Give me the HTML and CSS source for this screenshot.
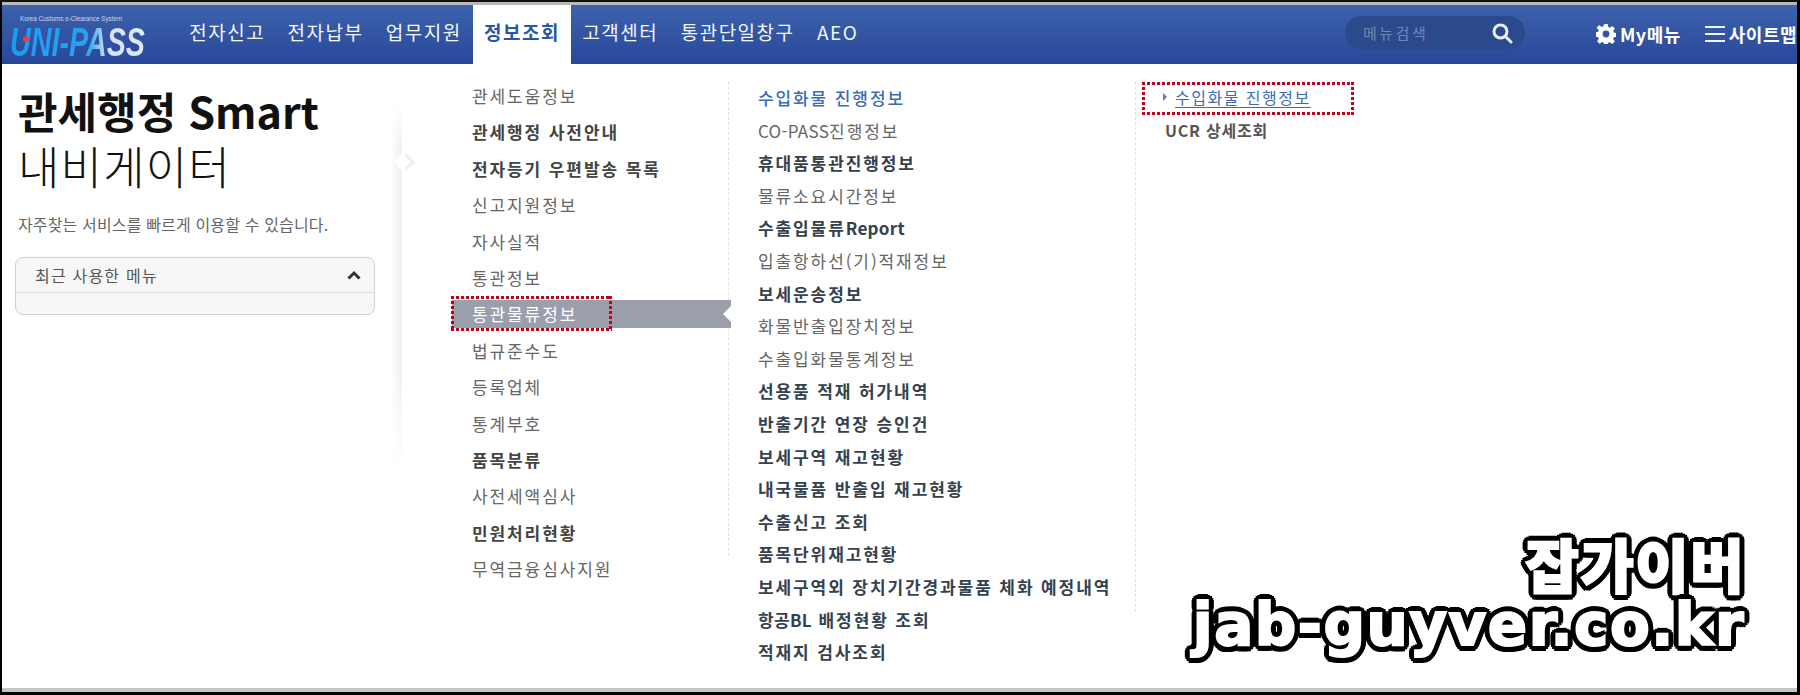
FILE: index.html
```html
<!DOCTYPE html>
<html lang="ko">
<head>
    <meta charset="UTF-8">
    <title>UNI-PASS 관세행정 Smart 내비게이터</title>
    <link rel="stylesheet" href="styles.css">
</head>
<body>
    <div class="frame">
        <header class="topbar">
            <div class="logo">
                <span class="logo-sub">Korea Customs e-Clearance System</span>
                <span class="logo-name">UNI-PASS</span>
            </div>
            <nav class="gnb">
                <a>전자신고</a>
                <a>전자납부</a>
                <a>업무지원</a>
                <a class="active">정보조회</a>
                <a>고객센터</a>
                <a>통관단일창구</a>
                <a>AEO</a>
            </nav>
            <div class="search">
                <span>메뉴검색</span>
                <svg width="22" height="22" viewBox="0 0 22 22" fill="none" stroke="#e8edf6" stroke-width="3">
                    <circle cx="9.5" cy="9.5" r="6.5"/>
                    <path d="M14.5 14.5l5.5 5.5" stroke-linecap="round"/>
                </svg>
            </div>
            <a class="util util-my">
                <svg width="20" height="20" viewBox="0 0 20 20">
                    <path fill="#fff" fill-rule="evenodd" d="M8.2 0h3.6l.5 3 1.6.7 2.5-1.8 2.5 2.6-1.7 2.5.6 1.6 3 .6v3.6l-3 .5-.7 1.6 1.8 2.5-2.6 2.5-2.500-1.700-1.600.6-.5 2.900H8.200l-.5-3-1.600-.6-2.500 1.700-2.500-2.500 1.700-2.500-.6-1.600-3-.6V8.300l3-.6.6-1.500L.6 3.700 3.200 1.100l2.500 1.800 1.600-.7zM10 6.600a3.400 3.400 0 100 6.800 3.400 3.400 0 000-6.800z"/>
                </svg>
                My메뉴
            </a>
            <a class="util util-map">
                <svg width="20" height="17" viewBox="0 0 20 17" fill="#f2f5fb">
                    <rect y="1" width="20" height="2"/>
                    <rect y="8" width="20" height="2"/>
                    <rect y="15" width="20" height="2"/>
                </svg>
                사이트맵
            </a>
        </header>

        <main class="content">
            <aside class="intro">
                <h1><b>관세행정 Smart</b><br><span class="h1-sub">내비게이터</span></h1>
                <p>자주찾는 서비스를 빠르게 이용할 수 있습니다.</p>
                <div class="recent">
                    <div class="recent-head">
                        최근 사용한 메뉴
                        <svg width="14" height="10" viewBox="0 0 14 10" fill="none" stroke="#333" stroke-width="3">
                            <path d="M1.500 8.500L7 3l5.500 5.500"/>
                        </svg>
                    </div>
                </div>
            </aside>

            <ul class="menu menu-1">
                <li>관세도움정보</li>
                <li class="strong">관세행정 사전안내</li>
                <li class="strong">전자등기 우편발송 목록</li>
                <li>신고지원정보</li>
                <li>자사실적</li>
                <li>통관정보</li>
                <li class="selected">통관물류정보</li>
                <li>법규준수도</li>
                <li>등록업체</li>
                <li>통계부호</li>
                <li class="strong">품목분류</li>
                <li>사전세액심사</li>
                <li class="strong">민원처리현황</li>
                <li>무역금융심사지원</li>
            </ul>

            <ul class="menu menu-2">
                <li class="current">수입화물 진행정보</li>
                <li><span class="en">CO-PASS</span>진행정보</li>
                <li class="strong">휴대품통관진행정보</li>
                <li>물류소요시간정보</li>
                <li class="strong">수출입물류<span class="en">Report</span></li>
                <li>입출항하선(기)적재정보</li>
                <li class="strong">보세운송정보</li>
                <li>화물반출입장치정보</li>
                <li>수출입화물통계정보</li>
                <li class="strong">선용품 적재 허가내역</li>
                <li class="strong">반출기간 연장 승인건</li>
                <li class="strong">보세구역 재고현황</li>
                <li class="strong">내국물품 반출입 재고현황</li>
                <li class="strong">수출신고 조회</li>
                <li class="strong">품목단위재고현황</li>
                <li class="strong">보세구역외 장치기간경과물품 체화 예정내역</li>
                <li class="strong"><span class="en">항공BL</span> 배정현황 조회</li>
                <li class="strong">적재지 검사조회</li>
            </ul>

            <ul class="menu menu-3">
                <li class="link">수입화물 진행정보</li>
                <li class="strong">UCR 상세조회</li>
            </ul>

            <div class="mark mark-1"></div>
            <div class="mark mark-2"></div>
            <div class="watermark">
                <div class="wm-ko">잡가이버</div>
                <div class="wm-en">jab-guyver.co.kr</div>
            </div>
        </main>
    </div>
</body>
</html>
```

FILE: styles.css
```css
* {
    box-sizing: border-box;
}
html, body {
    margin: 0;
    padding: 0;
    height: 100%;
    overflow: hidden;
    background: #fff;
}
body {
    font-family: "Noto Sans CJK KR", "Noto Sans", sans-serif;
    color: #555;
}
a {
    color: inherit;
    text-decoration: none;
}
.frame {
    height: 695px;
    display: flex;
    flex-direction: column;
    border-top: 2px solid #111;
    border-left: 2px solid #000;
    border-right: 3px solid #000;
    border-bottom: 3px solid #000;
}

/* top bar */
.topbar {
    height: 62px;
    border-top: 3px solid #b9b9b9;
    background: linear-gradient(#3d63ac, #28479a);
    display: flex;
    align-items: center;
    color: #fff;
    flex: none;
    overflow: hidden;
}
.logo {
    width: 176px;
    height: 100%;
    padding: 10px 0 0 8px;
    flex: none;
    position: relative;
}
.logo::after {
    content: "";
    position: absolute;
    left: 21px;
    top: 31px;
    width: 6px;
    height: 6px;
    border-radius: 50%;
    background: #e0405a;
}
.logo-sub {
    display: block;
    font: 6.300px/8px "Liberation Sans", sans-serif;
    color: #c9d6ee;
    padding-left: 10px;
    white-space: nowrap;
}
.logo-name {
    display: inline-block;
    margin-top: 4px;
    white-space: nowrap;
    font: italic bold 41px/31px "Liberation Sans", sans-serif;
    transform: scaleX(0.7);
    transform-origin: left center;
    background: linear-gradient(90deg, #1b9bf0 0%, #2aa3ee 58%, #d5e2f2 72%, #e2e9f3 100%);
    -webkit-background-clip: text;
    background-clip: text;
    color: transparent;
}
.gnb {
    display: flex;
    height: 100%;
    flex: none;
    width: 1167px;
}
.gnb a {
    padding: 0 11.200px 6px;
    display: flex;
    align-items: center;
    font-size: 19px;
    letter-spacing: 1.500px;
    color: #f2f5fb;
}
.gnb a.active {
    background: #fff;
    color: #2a56a8;
    font-weight: 700;
}
.search {
    width: 180px;
    height: 33px;
    flex: none;
    margin: 0 0 4px 0;
    border-radius: 17px;
    background: #2a4a8c;
    display: flex;
    align-items: center;
    justify-content: space-between;
    padding: 0 12px 0 18px;
    font-size: 15px;
    letter-spacing: 2.500px;
    color: #6f87b8;
}
.util {
    display: flex;
    align-items: center;
    gap: 4px;
    flex: none;
    font-size: 18px;
    letter-spacing: 0.500px;
    font-weight: 700;
    margin-bottom: 2px;
    white-space: nowrap;
}
.util-my {
    margin-left: 71px;
}
.util-map {
    margin-left: 24px;
}

/* body of the page */
.content {
    flex: 1;
    display: flex;
    position: relative;
    min-height: 0;
    overflow: hidden;
}
.content::after {
    content: "";
    position: absolute;
    left: 0;
    right: 0;
    bottom: 0;
    height: 4px;
    background: #c4c4c4;
}
.intro {
    width: 400px;
    flex: none;
    padding: 18px 0 0 13px;
    position: relative;
}
.intro::after {
    content: "";
    position: absolute;
    left: 388px;
    top: 36px;
    width: 12px;
    height: 370px;
    background: linear-gradient(90deg, #fff, #eee);
    -webkit-mask-image: linear-gradient(transparent, #000 15%, #000 70%, transparent);
    mask-image: linear-gradient(transparent, #000 15%, #000 70%, transparent);
}
.intro::before {
    content: "";
    position: absolute;
    left: 394px;
    top: 92px;
    width: 12px;
    height: 12px;
    background: #fff;
    transform: rotate(45deg);
    box-shadow: 3px -3px 2px #eee;
    z-index: 1;
}
.intro h1 {
    margin: 0;
    padding-left: 3px;
    font-size: 43px;
    line-height: 56px;
    font-weight: 300;
    color: #111;
}
.intro h1 b {
    font-weight: 700;
}
.h1-sub {
    font-size: 45px;
    letter-spacing: 1.200px;
}
.intro p {
    margin: 19px 0 0 3px;
    font-size: 16px;
    line-height: 22px;
    letter-spacing: 0.150px;
    color: #666;
}
.recent {
    width: 360px;
    height: 58px;
    margin-top: 22px;
    border: 1px solid #d0d0d0;
    border-radius: 8px;
    background: #f7f7f7;
}
.recent-head {
    height: 35px;
    padding: 0 13px 0 19px;
    display: flex;
    align-items: center;
    justify-content: space-between;
    font-size: 16px;
    letter-spacing: 1.200px;
    color: #555;
    border-bottom: 1px solid #ddd;
}

/* menu columns */
.menu {
    list-style: none;
    margin: 0;
    padding: 0;
    flex: none;
    white-space: nowrap;
    font-size: 17px;
    letter-spacing: 1.900px;
    color: #666;
}
.menu .strong {
    font-weight: 700;
    color: #444;
}
.menu .en {
    letter-spacing: 0.300px;
}
.menu-1 {
    width: 326px;
    padding: 14px 0 0 70px;
}
.menu-1 li {
    height: 36.400px;
    line-height: 36.400px;
}
.menu-1 .selected {
    margin: 4px -3px 4.400px -20px;
    padding-left: 20px;
    height: 28px;
    line-height: 28px;
    background: #9a9fab;
    color: #fff;
    position: relative;
    z-index: 1;
}
.menu-1 .selected::after {
    content: "";
    position: absolute;
    right: 0;
    top: 6px;
    border: 8px solid transparent;
    border-right-color: #fff;
    border-left-width: 0;
}
.menu-2 {
    width: 407px;
    padding: 18px 0 0 30px;
    position: relative;
}
.menu-2::before,
.menu-3::before {
    content: "";
    position: absolute;
    left: 0;
    top: 18px;
    border-left: 1px dashed #e1e1e1;
}
.menu-2::before {
    height: 474px;
}
.menu-3::before {
    height: 530px;
}
.menu-2 li {
    height: 32.600px;
    line-height: 32.600px;
}
.menu-2 .strong {
    color: #34424f;
}
.menu-2 .current {
    color: #3b6cb5;
    font-weight: 500;
}
.menu-3 {
    flex: 1;
    position: relative;
    padding: 17px 0 0 40px;
    font-size: 16px;
    letter-spacing: 1.500px;
}
.menu-3 li {
    height: 32.600px;
    line-height: 32.600px;
}
.menu-3 .link {
    color: #3b6cb5;
    position: relative;
    text-decoration: underline;
    text-underline-offset: 3px;
}
.menu-3 .link::before {
    content: "";
    position: absolute;
    left: -12px;
    top: 12px;
    border: 4px solid transparent;
    border-left: 4px solid #5b7fb8;
    border-right: 0;
}
.menu-3 .strong {
    margin-left: -10px;
    letter-spacing: 0.800px;
    color: #555;
}

/* red dotted marks drawn over the capture */
.mark {
    position: absolute;
    z-index: 2;
    background:
        repeating-linear-gradient(90deg, #c4001a 0 3px, transparent 3px 5px) top / 100% 3px no-repeat,
        repeating-linear-gradient(90deg, #c4001a 0 3px, transparent 3px 5px) bottom / 100% 3px no-repeat,
        repeating-linear-gradient(#c4001a 0 3px, transparent 3px 5px) left / 3px 100% no-repeat,
        repeating-linear-gradient(#c4001a 0 3px, transparent 3px 5px) right / 3px 100% no-repeat;
}
.mark-1 {
    left: 449px;
    top: 232px;
    width: 161px;
    height: 35px;
}
.mark-2 {
    left: 1140px;
    top: 18px;
    width: 212px;
    height: 33px;
}

/* blog watermark, outline built from shadows so the fill stays fat */
.watermark {
    position: absolute;
    right: 52px;
    bottom: 36px;
    text-align: right;
    color: #fff;
    font-weight: 700;
    -webkit-text-stroke: 2px #fff;
    text-shadow:
        6px 0 #000, 5.500px 2.300px #000, 4.200px 4.200px #000, 2.300px 5.500px #000,
        0 6px #000, -2.300px 5.500px #000, -4.200px 4.200px #000, -5.500px 2.300px #000,
        -6px 0 #000, -5.500px -2.300px #000, -4.200px -4.200px #000, -2.300px -5.500px #000,
        0 -6px #000, 2.300px -5.500px #000, 4.200px -4.200px #000, 5.500px -2.300px #000;
    z-index: 3;
}
.wm-ko {
    font-family: "Noto Sans CJK KR", sans-serif;
    font-weight: 900;
    font-size: 58px;
    line-height: 62px;
    letter-spacing: 1.500px;
}
.wm-en {
    font-family: "DejaVu Sans", sans-serif;
    font-size: 58px;
    line-height: 62px;
    letter-spacing: 1.500px;
}
```
